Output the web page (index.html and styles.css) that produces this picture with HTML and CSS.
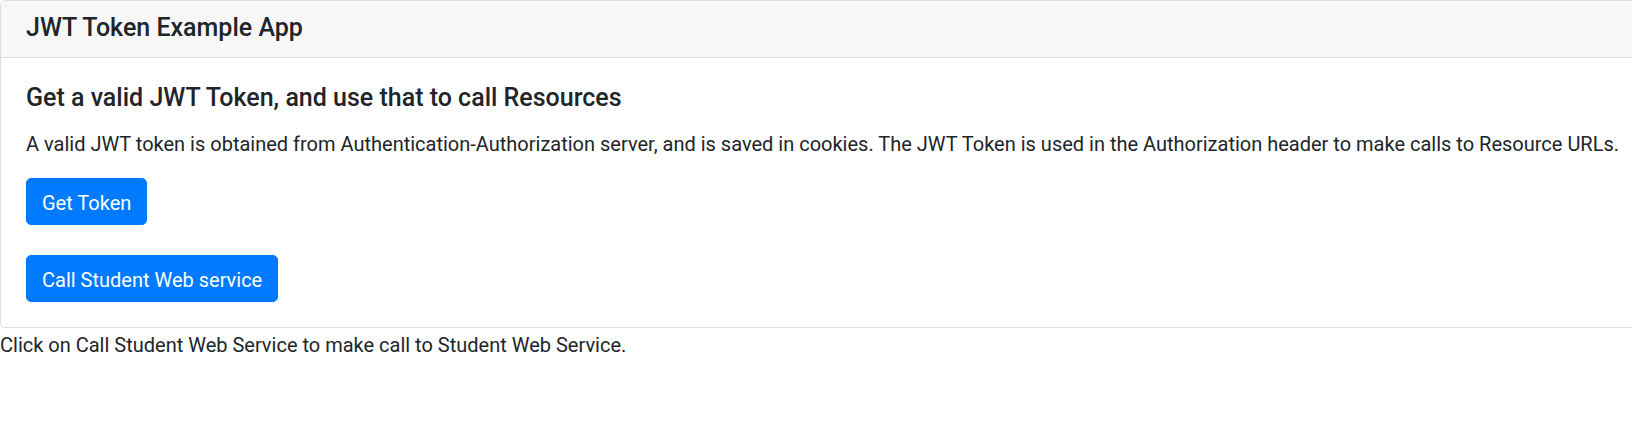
FILE: index.html
```html
<!DOCTYPE html>
<html>
<head>
<meta charset="utf-8">
<title>JWT Token Example App</title>
<link rel="stylesheet" href="styles.css">
</head>
<body>
<div class="card">
  <div class="card-header">JWT Token Example App</div>
  <div class="card-body">
    <h5 class="card-title">Get a valid JWT Token, and use that to call Resources</h5>
    <p class="card-text">A valid JWT token is obtained from Authentication-Authorization server, and is saved in cookies. The JWT Token is used in the Authorization header to make calls to Resource URLs.</p>
    <div class="actions">
      <button class="btn" type="button">Get Token</button>
      <button class="btn" type="button">Call Student Web service</button>
    </div>
  </div>
</div>
<div class="result">Click on Call Student Web Service to make call to Student Web Service.</div>
</body>
</html>
```
FILE: styles.css
```css
html {
  overflow: hidden;
}
body {
  margin: 0;
  font-family: Roboto, "Liberation Sans", sans-serif;
  font-size: 20px;
  line-height: 30px;
  color: #212529;
  background: #fff;
}
.card {
  width: 1700px;
  border: 1px solid #dfdfdf;
  border-radius: 5px;
  background: #fff;
}
.card-header {
  padding: 12px 25px 14px;
  background: #f7f7f7;
  border-bottom: 1px solid #dfdfdf;
  border-radius: 4px 4px 0 0;
  font-size: 25px;
  font-weight: 500;
  line-height: 30px;
}
.card-body {
  padding: 25px;
}
.card-title {
  margin: 0 0 16px;
  font-size: 25px;
  font-weight: 500;
  line-height: 30px;
}
.card-text {
  margin: 0 0 19px;
  white-space: nowrap;
}
.actions {
  display: flex;
  flex-direction: column;
  align-items: flex-start;
  gap: 30px;
}
.btn {
  display: inline-block;
  padding: 8.5px 15px 6.5px;
  border: 1px solid #007bff;
  border-radius: 5px;
  background: #007bff;
  color: #fff;
  font-family: inherit;
  font-size: 20px;
  line-height: 30px;
  cursor: pointer;
}
.result {
  padding-top: 2px;
}
```
